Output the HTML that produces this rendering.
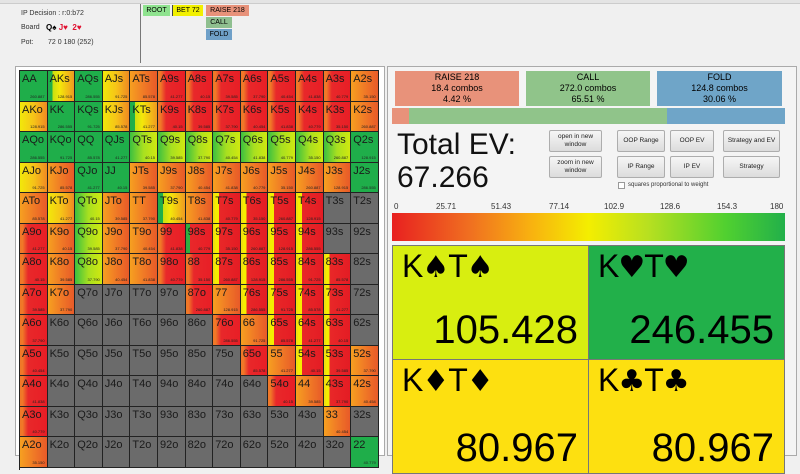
<!DOCTYPE html>
<html><head><meta charset="utf-8"><style>
*{margin:0;padding:0;box-sizing:border-box}
body{width:800px;height:450px;overflow:hidden;background:#f0f0f0;font-family:"Liberation Sans",sans-serif;position:relative}
.a{position:absolute}
.t{font-size:7px;color:#333}
.btn{position:absolute;background:linear-gradient(#f6f6f6,#dcdcdc);border:1px solid #adadad;border-radius:2px;font-size:6.5px;color:#222;display:flex;align-items:center;justify-content:center;text-align:center;line-height:8px}
.cell{position:absolute;border-right:1px solid #222;border-bottom:1px solid #222;overflow:hidden}
.cell b{position:absolute;left:2px;top:2px;font-weight:normal;font-size:11px;color:#1a1a1a}
.cell i{position:absolute;right:2px;bottom:2px;font-style:normal;font-size:4px;color:#222}
.card{position:absolute;border:1px solid #777;overflow:hidden}
.card .h{position:absolute;left:9px;top:2px;font-size:32px;color:#000;letter-spacing:-1px}
.card .h s{text-decoration:none;font-family:"DejaVu Sans",sans-serif;font-size:30px}
.card .n{position:absolute;right:10px;top:62px;font-size:40px;color:#000}
</style></head><body>
<div class="a" style="left:0;top:0;width:800px;height:4px;background:#e4e4e4;border-bottom:1px solid #ccc"></div>
<div class="a t" style="left:21px;top:10px">IP Decision : r:0:b72</div>
<div class="a t" style="left:21px;top:24px">Board</div>
<div class="a" style="left:46px;top:23px;font-size:8px;font-weight:bold">Q♠ <span style="color:#e01030">J♥</span> <span style="color:#e01030">&nbsp;2♥</span></div>
<div class="a t" style="left:21px;top:39px">Pot:</div>
<div class="a t" style="left:48px;top:39px">72 0 180 (252)</div>
<div class="a" style="left:140px;top:4px;width:1px;height:59px;background:#777"></div>
<div class="a" style="left:143px;top:5px;width:27px;height:11px;background:#8fe38f;font-size:7px;text-align:center;line-height:11px">ROOT</div>
<div class="a" style="left:172px;top:5px;width:1px;height:11px;background:#444"></div>
<div class="a" style="left:173px;top:5px;width:30px;height:11px;background:#f2f000;font-size:7px;text-align:center;line-height:11px">BET 72</div>
<div class="a" style="left:206px;top:5px;width:43px;height:11px;background:#e8927a;font-size:7px;text-align:center;line-height:11px">RAISE 218</div>
<div class="a" style="left:206px;top:17px;width:26px;height:11px;background:#8fbf8f;font-size:7px;text-align:center;line-height:11px">CALL</div>
<div class="a" style="left:206px;top:29px;width:26px;height:11px;background:#6fa0c8;font-size:7px;text-align:center;line-height:11px">FOLD</div>
<div class="a" style="left:15px;top:66px;width:370px;height:390px;border:1px solid #aaa;background:#fff"></div>
<div class="a" style="left:387px;top:66px;width:410px;height:390px;border:1px solid #aaa;background:#f4f4f4"></div>
<div id="m" class="a" style="left:19px;top:70px;width:360px;height:400px;border-left:1px solid #222;border-top:1px solid #222"></div>

<div class="a" style="left:395px;top:71px;width:124px;height:35px;background:#e8927a;font-size:9px;text-align:center;line-height:11px;padding-top:1px">RAISE 218<br>18.4 combos<br>4.42 %</div>
<div class="a" style="left:526px;top:71px;width:124px;height:35px;background:#90c48a;font-size:9px;text-align:center;line-height:11px;padding-top:1px">CALL<br>272.0 combos<br>65.51 %</div>
<div class="a" style="left:657px;top:71px;width:125px;height:35px;background:#6fa5c8;font-size:9px;text-align:center;line-height:11px;padding-top:1px">FOLD<br>124.8 combos<br>30.06 %</div>
<div class="a" style="left:392px;top:108px;width:17px;height:16px;background:#e8927a"></div>
<div class="a" style="left:409px;top:108px;width:258px;height:16px;background:#90c48a"></div>
<div class="a" style="left:667px;top:108px;width:118px;height:16px;background:#6fa5c8"></div>
<div class="a" style="left:397px;top:128px;font-size:30px;line-height:33px;color:#111">Total EV:<br>67.266</div>
<div class="btn" style="left:549px;top:130px;width:53px;height:22px">open in new<br>window</div>
<div class="btn" style="left:549px;top:156px;width:53px;height:22px">zoom in new<br>window</div>
<div class="btn" style="left:617px;top:130px;width:48px;height:22px">OOP Range</div>
<div class="btn" style="left:670px;top:130px;width:44px;height:22px">OOP EV</div>
<div class="btn" style="left:723px;top:130px;width:57px;height:22px">Strategy and EV</div>
<div class="btn" style="left:617px;top:156px;width:48px;height:22px">IP Range</div>
<div class="btn" style="left:670px;top:156px;width:44px;height:22px">IP EV</div>
<div class="btn" style="left:723px;top:156px;width:57px;height:22px">Strategy</div>
<div class="a" style="left:618px;top:182px;width:7px;height:7px;border:1px solid #999;background:#fff"></div>
<div class="a" style="left:628px;top:182px;font-size:6px;color:#333">squares proportional to weight</div>
<div class="a" style="left:394px;top:202px;width:392px;font-size:8px;color:#333">
<span class="a" style="left:0">0</span><span class="a" style="left:42px">25.71</span><span class="a" style="left:97px">51.43</span><span class="a" style="left:155px">77.14</span><span class="a" style="left:210px">102.9</span><span class="a" style="left:266px">128.6</span><span class="a" style="left:323px">154.3</span><span class="a" style="left:376px">180</span></div>
<div class="a" style="left:392px;top:213px;width:393px;height:28px;background:linear-gradient(90deg,#e82020,#f07020 20%,#f8b010 35%,#f4ee00 50%,#b8e020 65%,#50d030 85%,#22b04a)"></div>
<div class="card" style="left:392px;top:245px;width:197px;height:115px;background:#d8ee10"><span class="h">K<s>♠</s>T<s>♠</s></span><span class="n">105.428</span></div>
<div class="card" style="left:588px;top:245px;width:197px;height:115px;background:#22b04a"><span class="h">K<s>♥</s>T<s>♥</s></span><span class="n">246.455</span></div>
<div class="card" style="left:392px;top:359px;width:197px;height:115px;background:#fde010"><span class="h">K<s>♦</s>T<s>♦</s></span><span class="n" style="top:66px">80.967</span></div>
<div class="card" style="left:588px;top:359px;width:197px;height:115px;background:#fde010"><span class="h">K<s>♣</s>T<s>♣</s></span><span class="n" style="top:66px">80.967</span></div>

<script>
var R="AKQJT98765432";
var rows=[
"g gy g y o r r r r r r r o",
"y g g y gy r r r r r r r o",
"g g g g lg lg lg lg lg lg lg lg g",
"y o g g o o o o o o o o g",
"o y lg o o gy o ry ry ry ry x x",
"r o lg o o r rg ry ry ry ry x x",
"r o lg o o r r ry ry ry ry ry x",
"r o x x x x r o ry ry ry ry x",
"r x x x x x x r o ry ry ry x",
"r x x x x x x x r o ry ry o",
"r x x x x x x x x r o ry o",
"r x x x x x x x x x x o x",
"o x x x x x x x x x x x g"];
var bg={
g:"#1fae4a",
gy:"linear-gradient(90deg,#1fae4a 0 18%,#c8e010 18%,#f4e80a 45%,#f09a20 100%)",
y:"linear-gradient(90deg,#f2e80a,#f6c418 50%,#f08a22)",
o:"linear-gradient(90deg,#f6a020,#f07a26 50%,#e85a28)",
r:"linear-gradient(90deg,#f07828 0 10%,#e8282a 30%,#e81e26)",
rg:"linear-gradient(90deg,#30b040 0 15%,#e8282a 15%,#e81e26)",
ry:"linear-gradient(90deg,#f0e010 0 8%,#f4ee00 8% 22%,#e82828 22%,#e41c24)",
lg:"linear-gradient(90deg,#3cc040,#a8e020 50%,#d0e810)",
x:"#6b6b6b"};
var nums=["260.887","128.915","286.555","91.725","85.578","41.277","40.15","39.585","37.790","40.454","41.838","40.779","35.150"];
var h="",W=27.6,H=30.5;
for(var i=0;i<13;i++){var c=rows[i].split(" ");for(var j=0;j<13;j++){
var n=i==j?R[i]+R[i]:(j>i?R[i]+R[j]+"s":R[j]+R[i]+"o");
h+='<div class="cell" style="left:'+(j*W)+'px;top:'+(i*H)+'px;width:'+W+'px;height:'+H+'px;background:'+bg[c[j]]+'"><b>'+n+'</b>'+(c[j]!="x"?'<i>'+nums[(i+j)%13]+'</i>':'')+'</div>';}}
document.getElementById("m").innerHTML=h;
</script>
</body></html>
